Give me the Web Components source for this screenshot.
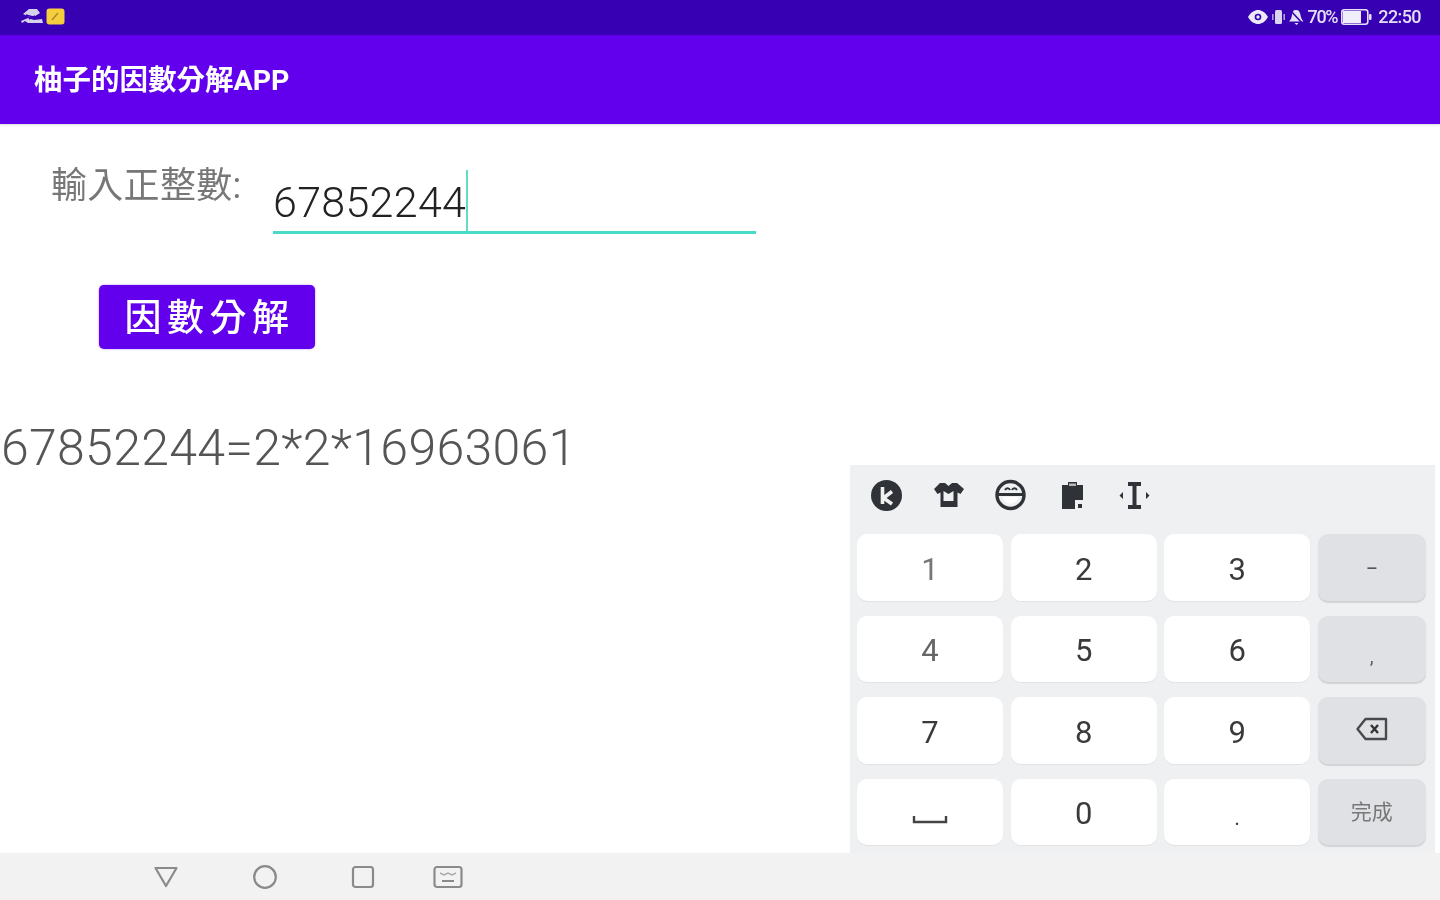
<!DOCTYPE html>
<html lang="zh-Hant">
<head>
<meta charset="utf-8">
<title>柚子的因數分解APP</title>
<style>
html,body{margin:0;padding:0;height:100%;background:#fff}
body{width:1440px;height:900px;overflow:hidden;font-family:Roboto,"Noto Sans CJK TC",sans-serif}
phone-screen{height:900px}
</style>
</head>
<body>
<template id="t-screen">
<style>
:host{display:flex;flex-direction:column;width:1440px;height:900px;background:#fff}
.body{flex:1;display:flex;min-height:0}
.left{width:850px;flex:none}
.right{flex:1;display:flex;align-items:flex-end}
</style>
<status-bar></status-bar>
<app-bar>柚子的因數分解APP</app-bar>
<div class="body">
<div class="left"><factor-form></factor-form></div>
<div class="right"><soft-keyboard></soft-keyboard></div>
</div>
<nav-bar></nav-bar>
</template>

<template id="t-status">
<style>
:host{display:flex;align-items:center;justify-content:space-between;height:35px;background:#3700b3;color:#e4dff5;box-sizing:border-box;padding:0 19px 2px 20px;font:500 18px/1 Roboto,sans-serif}
.g{display:flex;align-items:center;filter:blur(.7px)}
svg{display:block}
.pct{letter-spacing:-1.300px;margin-left:4px}
.time{letter-spacing:-.6px;margin-left:6px}
</style>
<div class="g">
<svg width="25" height="17" viewBox="0 0 25 17"><path d="M3 6 9 1h8l3 4-8 5zM1 13l7-3 6 2 8-1 1 4H8l-3-2-3 2z" fill="#d5d0ee"/><path d="M6 7l7 2M9 11l6-3" stroke="#3700b3" stroke-width="1.400" fill="none"/></svg>
<svg width="19" height="17" viewBox="0 0 19 17" style="margin-left:1px"><rect x=".5" y=".5" width="18" height="16" rx="3" fill="#f5cd3d"/><path d="M6 12 12 5" stroke="#a9892c" stroke-width="1.400"/></svg>
</div>
<div class="g" style="margin-left:-2px">
<svg width="20" height="14" viewBox="0 0 20 14"><path d="M0 7C3 2 6.500 0 10 0s7 2 10 7c-3 5-6.500 7-10 7S3 12 0 7z" fill="#ece9f8"/><circle cx="10" cy="7" r="3.300" fill="#3700b3"/><circle cx="10" cy="7" r="1.700" fill="#ece9f8"/></svg>
<svg width="13" height="16" viewBox="0 0 13 16" style="margin-left:4px"><rect x="3" y="1" width="7" height="14" rx="1.500" fill="#d9d4f0"/><path d="M.8 5v6M12.200 5v6" stroke="#b5a9e2" stroke-width="1.500"/></svg>
<svg width="15" height="16" viewBox="0 0 15 16" style="margin-left:4px"><path d="M7 1c3 0 4 2 4.500 5s1.500 5 3 6.500H0C2 10.500 2.500 9 3 6S4 1 7 1z" fill="#e6e2f6"/><path d="M1 1l13 14" stroke="#3700b3" stroke-width="1.600"/><path d="M5.500 14h4l-2 2z" fill="#e6e2f6"/></svg>
<span class="pct">70%</span>
<svg width="31" height="16" viewBox="0 0 31 16" style="margin-left:4px"><rect x=".8" y=".8" width="26" height="14.400" rx="2.500" fill="none" stroke="#e6e2f6" stroke-width="1.600"/><rect x="2" y="2" width="18" height="12" fill="#f0eefa"/><rect x="28" y="5" width="2.500" height="6" rx="1" fill="#e6e2f6"/></svg>
<span class="time">22:50</span>
</div>
</template>

<template id="t-appbar">
<style>
:host{display:flex;align-items:center;height:89px;background:#6200ee;color:#fff;box-sizing:border-box;padding:4px 0 0 34px;font:700 28.500px/1 Roboto,"Noto Sans CJK TC",sans-serif;box-shadow:0 1px 2px rgba(0,0,0,.15)}
span{filter:blur(.7px);letter-spacing:0}
</style>
<span><slot></slot></span>
</template>

<template id="t-form">
<style>
:host{display:block;font-family:Roboto,"Noto Sans CJK TC",sans-serif}
.row{display:flex;align-items:flex-start;padding:46px 0 0 51px}
.label{font-size:36px;line-height:38px;color:#777;width:222px;white-space:nowrap;margin-top:-3px;letter-spacing:.3px;filter:blur(.7px)}
.input{width:483px;height:64px;box-sizing:border-box;border-bottom:3px solid #48dcc6;display:flex;align-items:center;padding-top:3px;color:#222;font-size:43px;font-weight:300;letter-spacing:.3px;white-space:nowrap}
.input span{filter:blur(.6px)}
.caret{width:2px;height:61px;background:#62dcc9;margin-left:0;margin-top:-3px;flex:none}
button{display:block;margin:51px 0 0 99px;width:216px;height:64px;border:0;border-radius:5px;background:#6200ee;color:#fff;font:500 37px/1 "Noto Sans CJK TC",sans-serif;letter-spacing:5.500px;padding:0 0 4px 5px;box-shadow:0 0 2px rgba(98,0,238,.5)}
button span{filter:blur(.6px);display:block}
.result{margin:69px 0 0 1px;font-size:50px;line-height:60px;font-weight:300;color:#555;white-space:nowrap;letter-spacing:.3px;filter:blur(.6px)}
</style>
<div class="row"><div class="label">輸入正整數:</div><div class="input"><span>67852244</span><i class="caret"></i></div></div>
<button type="button"><span>因數分解</span></button>
<div class="result">67852244=2*2*16963061</div>
</template>

<template id="t-key">
<style>
:host{display:flex;align-items:center;justify-content:center;background:#fff;border-radius:10px;color:#3a3a3a;font:400 31px/1 Roboto,"Noto Sans CJK TC",sans-serif;padding-top:4px;box-sizing:border-box;box-shadow:0 1px 1px rgba(0,0,0,.06)}
:host([fn]){background:#dfe1e4;box-shadow:0 2px 1px rgba(0,0,0,.12);color:#666}
::slotted(*){display:block}
.t{filter:blur(.6px);display:flex}
</style>
<span class="t"><slot></slot></span>
</template>

<template id="t-kb">
<style>
:host{display:block;width:585px;height:388px;background:#eff0f2;box-sizing:border-box;padding:0 9px 0 7px}
.tools{display:flex;align-items:center;height:60px;margin-bottom:9px;padding-left:13px;gap:29px;filter:blur(.7px)}
.tools svg{display:block;width:33px;height:33px}
.keys{display:grid;grid-template-columns:146px 146px 146px 108px;grid-auto-rows:66.500px;column-gap:7.600px;row-gap:15px}
</style>
<div class="tools">
<svg viewBox="0 0 33 33"><circle cx="16.500" cy="16.500" r="15.500" fill="#2f3338"/><path d="M12.500 8v17M22 12.500l-8.500 6.500 8.500 6" stroke="#f0f0f0" stroke-width="3.600" fill="none"/></svg>
<svg viewBox="0 0 33 33"><path d="M8 4h5l3.500 3L20 4h5l7 6-3.500 5-3-1.500V28H8.500V13.500l-3 1.500L2 10z" fill="#2f3338"/><path d="M11.500 12l5 3 5-3v10h-10z" fill="#eff0f2"/></svg>
<svg viewBox="0 0 33 33"><circle cx="16.500" cy="16" r="13.500" fill="#eff0f2" stroke="#2f3338" stroke-width="3.400"/><path d="M4 15.500h25" stroke="#2f3338" stroke-width="3"/><path d="M9 18h15c-.5 4-3.500 6.500-7.500 6.500S9.500 22 9 18z" fill="#fff"/><path d="M11 11c1.500-2.500 4-2.500 5 0M18 11c1-2.500 3.500-2.500 5 0" stroke="#2f3338" stroke-width="2" fill="none"/></svg>
<svg viewBox="0 0 33 33"><path d="M6 6h6V3h9v3h6v15h-8v9H6z" fill="#2f3338"/><rect x="13" y="4.500" width="7" height="2.500" fill="#b6b8bb"/><rect x="22" y="25" width="4" height="4" fill="#2f3338"/></svg>
<svg viewBox="0 0 33 33"><path d="M10 5h13M10 28h13M16.500 5v23" stroke="#2f3338" stroke-width="4" fill="none"/><path d="M1.500 16.500l3.500-3.500v7zM31.500 16.500l-3.500-3.500v7z" fill="#2f3338"/></svg>
</div>
<div class="keys">
<kb-key style="color:#777">1</kb-key><kb-key>2</kb-key><kb-key>3</kb-key><kb-key fn style="font-size:22px;color:#555">−</kb-key>
<kb-key style="color:#666">4</kb-key><kb-key>5</kb-key><kb-key>6</kb-key><kb-key fn><span style="font-size:20px;padding-top:10px">,</span></kb-key>
<kb-key>7</kb-key><kb-key>8</kb-key><kb-key>9</kb-key><kb-key fn><svg style="margin-top:-6px" width="32" height="24" viewBox="0 0 32 24"><path d="M9.500 2H30v20H9.500L1.500 12z" fill="none" stroke="#4a4a4a" stroke-width="2.400" stroke-linejoin="round"/><path d="M15 8l7 8M22 8l-7 8" stroke="#333" stroke-width="2.400"/></svg></kb-key>
<kb-key><svg style="margin-top:12px" width="36" height="10" viewBox="0 0 36 10"><path d="M2 1v6h32V1" fill="none" stroke="#444" stroke-width="2.400"/></svg></kb-key><kb-key>0</kb-key><kb-key><span style="font-size:22px;padding-top:8px">.</span></kb-key><kb-key fn><span style="font-size:21px;color:#777;margin-top:-3px">完成</span></kb-key>
</div>
</template>

<template id="t-nav">
<style>
:host{display:flex;align-items:center;height:47px;background:#f2f2f2;box-sizing:border-box;padding-left:153px}
svg{display:block;filter:blur(.6px)}
</style>
<svg width="26" height="24" viewBox="0 0 26 24" style="margin-right:73px"><path d="M2.500 3h21L13 21z" fill="none" stroke="#8a8a8a" stroke-width="2.200" stroke-linejoin="round"/></svg>
<svg width="26" height="26" viewBox="0 0 26 26" style="margin-right:73px"><circle cx="13" cy="13" r="10.800" fill="none" stroke="#8a8a8a" stroke-width="2.200"/></svg>
<svg width="24" height="24" viewBox="0 0 24 24" style="margin-right:58px"><rect x="2" y="2" width="20" height="20" rx="2.500" fill="none" stroke="#8a8a8a" stroke-width="2.200"/></svg>
<svg width="30" height="24" viewBox="0 0 30 24"><rect x="1.500" y="2" width="27" height="20" rx="2.500" fill="none" stroke="#8a8a8a" stroke-width="2.200"/><path d="M9 16h12" stroke="#8a8a8a" stroke-width="2"/><path d="M7 8l4 2 4-2 4 2 4-2" stroke="#aaa" stroke-width="1.500" fill="none"/></svg>
</template>

<phone-screen></phone-screen>

<script>
const make=(name,id)=>customElements.define(name,class extends HTMLElement{
  constructor(){super();this.attachShadow({mode:"open"}).appendChild(document.getElementById(id).content.cloneNode(true));}
});
make("status-bar","t-status");
make("app-bar","t-appbar");
make("factor-form","t-form");
make("kb-key","t-key");
make("soft-keyboard","t-kb");
make("nav-bar","t-nav");
make("phone-screen","t-screen");
</script>
</body>
</html>
